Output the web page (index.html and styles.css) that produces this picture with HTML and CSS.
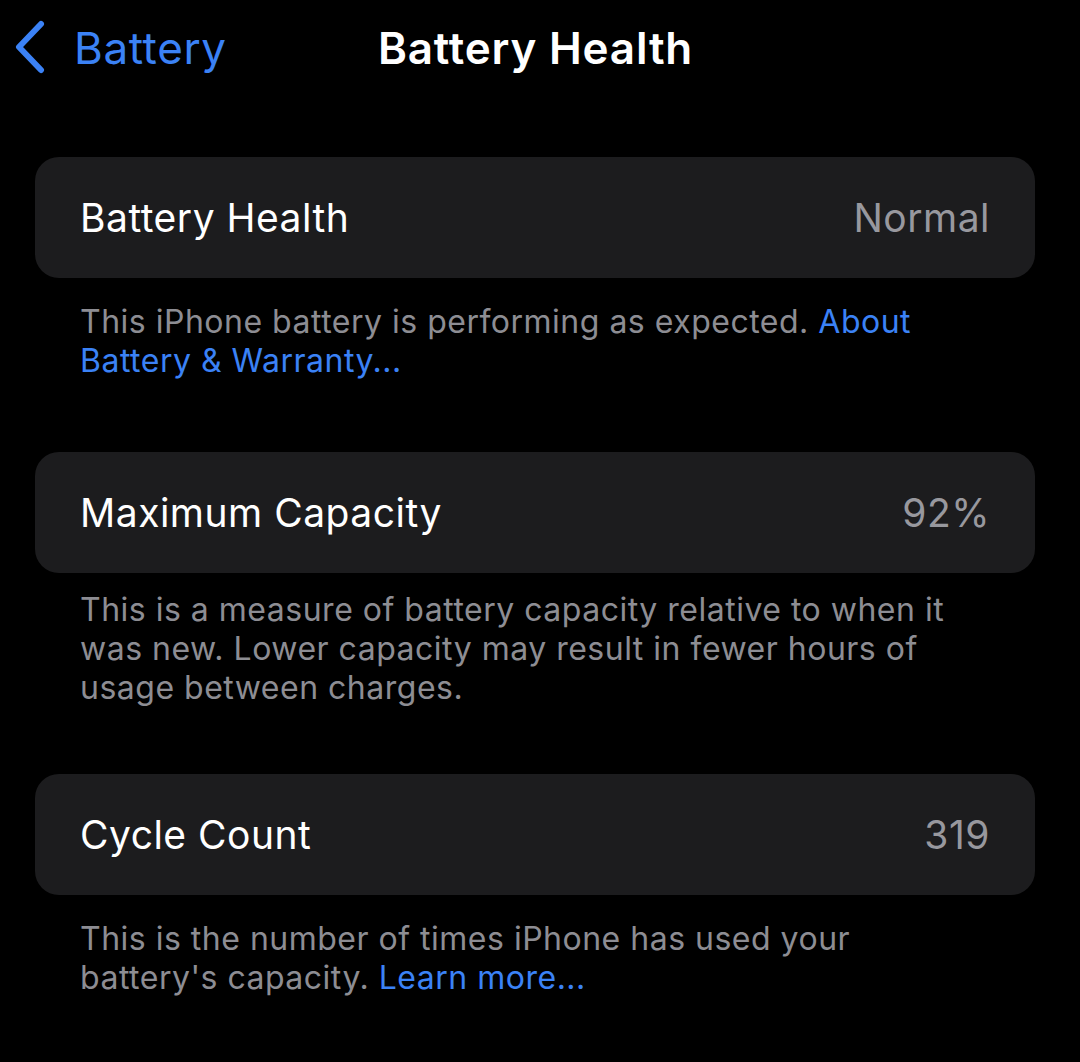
FILE: index.html
```html
<!DOCTYPE html>
<html lang="en">
<head>
<meta charset="utf-8">
<title>Battery Health</title>
<link rel="stylesheet" href="styles.css">
</head>
<body>
<header class="navbar">
  <a class="back" href="#">
    <svg class="chevron" width="30" height="54" viewBox="0 0 30 54" aria-hidden="true">
      <path d="M26 4 L4 27 L26 50" fill="none" stroke="currentColor" stroke-width="6" stroke-linecap="round" stroke-linejoin="round"/>
    </svg>
    <span class="back-label">Battery</span>
  </a>
  <h1 class="title">Battery Health</h1>
  <div class="spacer"></div>
</header>

<main class="content">
  <section class="group">
    <div class="card">
      <span class="label">Battery Health</span>
      <span class="value">Normal</span>
    </div>
    <p class="footer">This iPhone battery is performing as expected. <a class="link" href="#">About Battery &amp; Warranty...</a></p>
  </section>

  <section class="group">
    <div class="card">
      <span class="label">Maximum Capacity</span>
      <span class="value">92%</span>
    </div>
    <p class="footer footer-tight">This is a measure of battery capacity relative to when it was new. Lower capacity may result in fewer hours of usage between charges.</p>
  </section>

  <section class="group">
    <div class="card">
      <span class="label">Cycle Count</span>
      <span class="value">319</span>
    </div>
    <p class="footer">This is the number of times iPhone has used your battery's capacity. <a class="link" href="#">Learn more...</a></p>
  </section>
</main>
</body>
</html>
```

FILE: styles.css
```css
* {
  box-sizing: border-box;
}

html, body {
  margin: 0;
  padding: 0;
  background: #000;
}

body {
  font-family: Inter, "Noto Sans", "Liberation Sans", sans-serif;
  color: #fff;
  width: 1080px;
  min-height: 1062px;
  overflow: hidden;
}

.navbar {
  display: grid;
  grid-template-columns: 1fr auto 1fr;
  align-items: center;
  height: 96px;
  padding: 0 24px 0 15px;
}

.back {
  display: flex;
  align-items: center;
  gap: 29px;
  color: #3b82f6;
  text-decoration: none;
}

.chevron {
  display: block;
  color: #3b82f6;
  margin-top: -2px;
}

.back-label {
  font-size: 44px;
  font-weight: 400;
  letter-spacing: 0.6px;
}

.title {
  margin: 0;
  font-size: 44px;
  font-weight: 600;
  letter-spacing: 0.8px;
  color: #fff;
}

.content {
  padding: 61px 45px 0 35px;
}

.card {
  display: flex;
  align-items: center;
  justify-content: space-between;
  height: 121px;
  padding: 0 45px;
  background: #1c1c1e;
  border-radius: 24px;
  font-size: 39px;
  letter-spacing: 0.5px;
}

.label {
  color: #fff;
}

.value {
  color: #98989e;
}

.footer {
  margin: 0 0 72px;
  padding: 24px 45px 0;
  font-size: 32px;
  line-height: 39px;
  color: #8d8d93;
  letter-spacing: 0.5px;
}

.footer-tight {
  padding-top: 17px;
  margin-bottom: 67px;
}

.link {
  color: #3b82f6;
  text-decoration: none;
}
```
